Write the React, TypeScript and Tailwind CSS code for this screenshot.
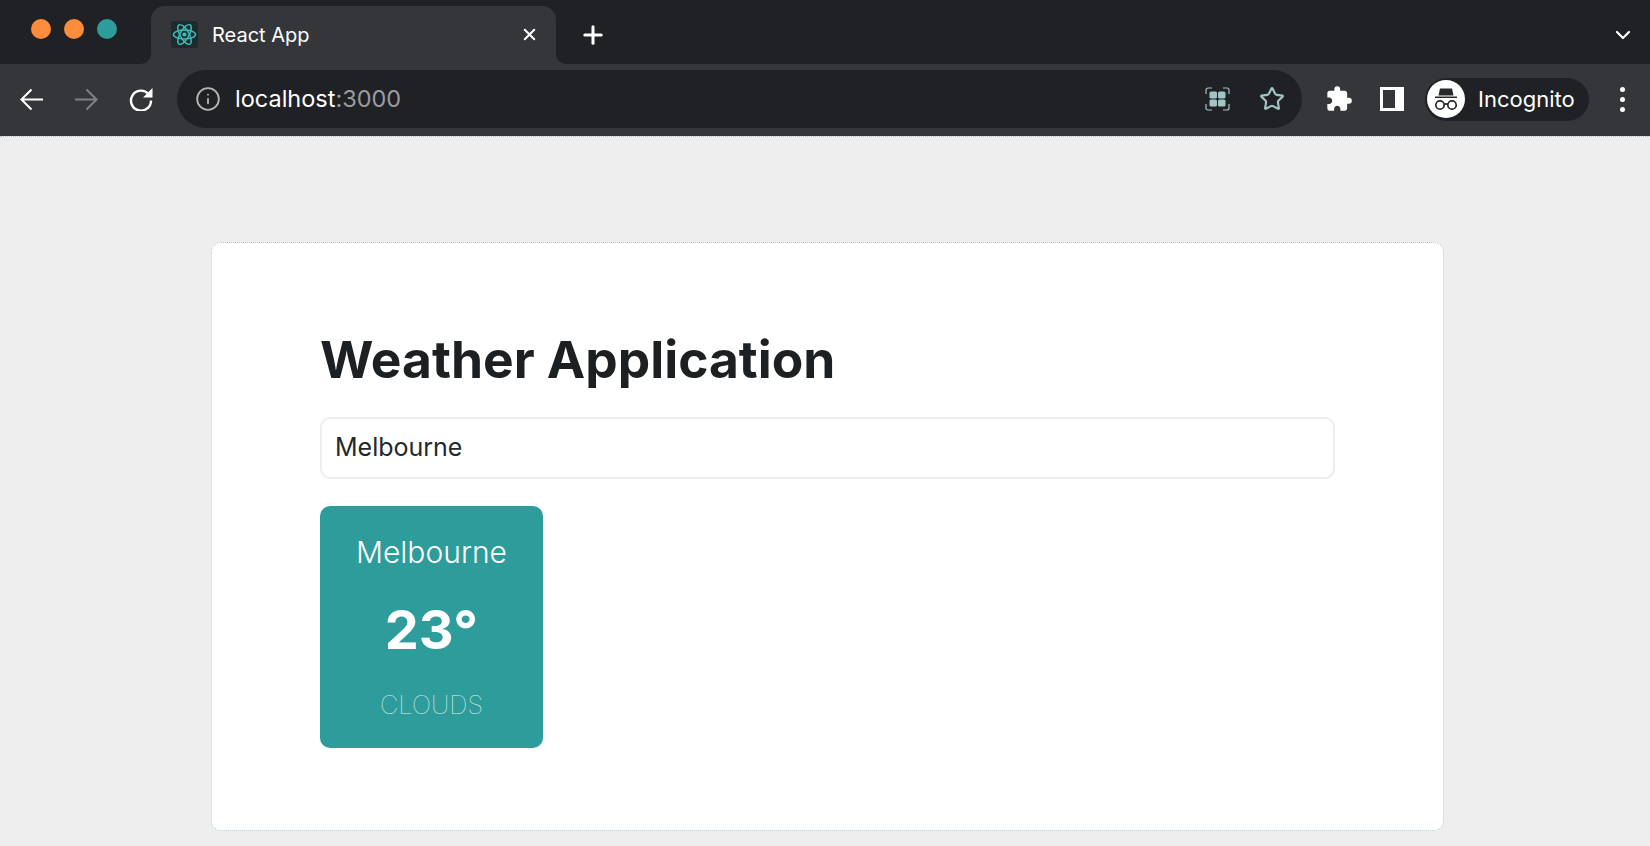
import { ChevronDown, Info, Plus, Star, X } from "lucide-react";
import { MdExtension } from "react-icons/md";

function ReactLogo() {
  return (
    <svg viewBox="0 0 28 28" className="w-[27px] h-[27px] rounded-[3px] bg-[#1e2a2e]" fill="none" stroke="#3dbdb8" strokeWidth="1.5">
      <ellipse cx="14" cy="14" rx="11.5" ry="4.6" />
      <ellipse cx="14" cy="14" rx="11.5" ry="4.6" transform="rotate(60 14 14)" />
      <ellipse cx="14" cy="14" rx="11.5" ry="4.6" transform="rotate(120 14 14)" />
      <circle cx="14" cy="14" r="2.2" fill="#3dbdb8" stroke="none" />
    </svg>
  );
}

function BackArrow({ className }: { className: string }) {
  return (
    <svg viewBox="0 0 24 24" className={className} fill="none" stroke="currentColor" strokeWidth="2.1">
      <path d="M24 12H2M12 1.5 1.5 12 12 22.5" />
    </svg>
  );
}

function ForwardArrow({ className }: { className: string }) {
  return (
    <svg viewBox="0 0 24 24" className={className} fill="none" stroke="currentColor" strokeWidth="2.1">
      <path d="M0 12h22M12 1.5 22.5 12 12 22.5" />
    </svg>
  );
}

function ReloadIcon() {
  return (
    <svg viewBox="0 0 24 24" className="w-6 h-6 text-white" fill="none" stroke="currentColor" strokeWidth="2.4">
      <path d="M19.5 7A10 10 0 1 0 22 13.5" />
      <path d="M23.5 1v9.5H14z" fill="currentColor" stroke="none" />
    </svg>
  );
}

function TabGroupsIcon() {
  return (
    <svg viewBox="0 0 25 24" className="w-[25px] h-6" fill="none" stroke="#a3c4c4" strokeWidth="1.2">
      <path d="M1 7V3a2 2 0 0 1 2-2h4M18 1h4a2 2 0 0 1 2 2v4M24 17v4a2 2 0 0 1-2 2h-4M7 23H3a2 2 0 0 1-2-2v-4" />
      <rect x="4.5" y="4.5" width="7.5" height="7" rx="1.5" fill="#a3c4c4" stroke="none" />
      <rect x="13" y="4.5" width="7.5" height="7" rx="1.5" fill="#a3c4c4" stroke="none" />
      <rect x="4.5" y="12.5" width="7.5" height="7" rx="1.5" fill="#a3c4c4" stroke="none" />
      <rect x="13" y="12.5" width="7.5" height="7" rx="1.5" fill="#a3c4c4" stroke="none" />
    </svg>
  );
}

function SidePanelIcon() {
  return (
    <svg viewBox="0 0 24 24" className="w-6 h-6">
      <path fillRule="evenodd" fill="#ffffff" d="M0 0h24v24H0zM3 3v18h12V3z" />
    </svg>
  );
}

function IncognitoIcon() {
  return (
    <svg viewBox="0 0 38 38" className="w-[38px] h-[38px] rounded-full bg-white">
      <path fill="#26282b" d="M13 8.5h12l1.5 7h-15z" />
      <path fill="#26282b" d="M8 16.5h22v1.6H8z" />
      <circle cx="13" cy="25" r="4.2" fill="none" stroke="#26282b" strokeWidth="1.7" />
      <circle cx="25" cy="25" r="4.2" fill="none" stroke="#26282b" strokeWidth="1.7" />
      <path fill="none" stroke="#26282b" strokeWidth="1.7" d="M17 24.5c1.3-.8 2.7-.8 4 0" />
    </svg>
  );
}

function TabStrip() {
  return (
    <div className="h-[64px] bg-[#202124] flex items-end">
      <div className="w-[151px] h-[64px] shrink-0 flex items-start gap-[13px] pl-[31px] pt-[19px]">
        <div className="w-5 h-5 rounded-full bg-[#ff8c3c]" />
        <div className="w-5 h-5 rounded-full bg-[#ff8c3c]" />
        <div className="w-5 h-5 rounded-full bg-[#2f9c9c]" />
      </div>
      <div className="relative w-[405px] h-[58px] bg-[#35363a] rounded-t-[14px] flex items-center pl-5 pr-[17px] pb-[1px]">
        <div className="absolute left-[-10px] bottom-0 w-[10px] h-[10px] bg-[#35363a]">
          <div className="w-full h-full bg-[#202124] rounded-br-[10px]" />
        </div>
        <div className="absolute right-[-10px] bottom-0 w-[10px] h-[10px] bg-[#35363a]">
          <div className="w-full h-full bg-[#202124] rounded-bl-[10px]" />
        </div>
        <ReactLogo />
        <span className="ml-[14px] text-[20px] text-white">React App</span>
        <X className="ml-auto text-white" size={19} strokeWidth={2.6} />
      </div>
      <div className="flex-1 h-[58px] flex items-center pb-[1px] pl-[23px] pr-[15px]">
        <Plus className="text-white" size={28} strokeWidth={2.6} />
        <ChevronDown className="ml-auto text-white" size={24} strokeWidth={2.2} />
      </div>
    </div>
  );
}

function Toolbar() {
  return (
    <div className="h-[72px] bg-[#35363a] flex items-center pl-5 pb-[2px]">
      <BackArrow className="w-[23px] h-[23px] text-white" />
      <ForwardArrow className="ml-[32px] w-[23px] h-[23px] text-[#808285]" />
      <div className="ml-[31px]">
        <ReloadIcon />
      </div>
      <div className="ml-[24px] w-[1125px] h-[58px] rounded-full bg-[#202124] flex items-center pl-[18px] pr-[17px]">
        <Info className="text-[#b4b6b8]" size={26} strokeWidth={1.7} />
        <span className="ml-[14px] text-[23.5px] text-white">
          localhost<span className="text-[#9a9ca0]">:3000</span>
        </span>
        <div className="ml-auto flex items-center gap-[29px]">
          <TabGroupsIcon />
          <Star className="text-[#a3c4c4]" size={26} strokeWidth={2} />
        </div>
      </div>
      <MdExtension className="ml-[23px] text-white" size={28} />
      <div className="ml-[27px]">
        <SidePanelIcon />
      </div>
      <div className="ml-[21px] w-[164px] h-[43px] rounded-full bg-[#202124] flex items-center pl-[2px]">
        <IncognitoIcon />
        <span className="ml-[13px] text-[22px] text-white">Incognito</span>
      </div>
      <div className="ml-[31px] flex flex-col gap-[5px]">
        <div className="w-[5px] h-[5px] rounded-full bg-white" />
        <div className="w-[5px] h-[5px] rounded-full bg-white" />
        <div className="w-[5px] h-[5px] rounded-full bg-white" />
      </div>
    </div>
  );
}

function WeatherCard() {
  return (
    <div className="w-[223px] h-[242px] rounded-[10px] bg-[#2f9c9c] flex flex-col items-center text-white">
      <div className="mt-[28px] text-[30px] leading-[36px] font-light">Melbourne</div>
      <div className="mt-[29px] text-[54px] leading-[62px] font-bold">23°</div>
      <div className="mt-[29px] text-[25.5px] leading-[30px] font-thin text-[#dcefef]">CLOUDS</div>
    </div>
  );
}

export default function App() {
  return (
    <div className="h-[846px] overflow-hidden bg-[#eeeeee] font-['Inter',sans-serif]">
      <TabStrip />
      <Toolbar />
      <main className="border-t border-dotted border-t-[#b9c9c9] pt-[105px] pl-[211px]">
        <div className="w-[1233px] h-[589px] bg-white rounded-[10px] border border-dotted border-[#a8c8ca] pt-[85px] pl-[108px] pr-[108px]">
          <h1 className="text-[51.5px] leading-[62px] font-bold text-[#1d2023]">Weather Application</h1>
          <div className="mt-[27px] h-[62px] rounded-[10px] border-2 border-[#eeeeee] flex items-center pl-[13px] text-[25px] text-[#22292d]">
            Melbourne
          </div>
          <div className="mt-[27px]">
            <WeatherCard />
          </div>
        </div>
      </main>
    </div>
  );
}
